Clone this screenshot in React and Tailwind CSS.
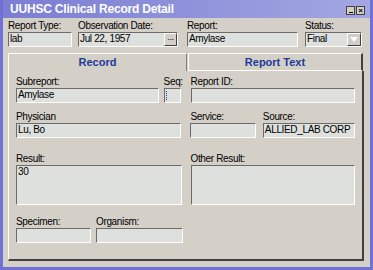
import React from 'react';

const font = { fontFamily: '"Liberation Sans", Arial, sans-serif' };

const Field = ({ label, value, className = '', h = 'h-[15px]', children }) => (
  <div className={`flex flex-col ${className}`}>
    <span className="text-[10px] leading-[12px] tracking-[-0.35px] text-black whitespace-nowrap">{label}</span>
    <div className={`relative ${h} bg-[#dde0dc] border border-t-[#6b6b6b] border-l-[#6b6b6b] border-b-[#ffffff] border-r-[#ffffff] text-[10px] leading-[12px] tracking-[-0.35px] px-[1px] text-black overflow-hidden whitespace-nowrap`}>
      {value}
      {children}
    </div>
  </div>
);

export default function App() {
  return (
    <div style={font} className="w-[373px] h-[270px] bg-[#d4d0c8] border-[3px] border-t-0 border-[#6f71d6] flex flex-col overflow-hidden">
      {/* title bar */}
      <div className="h-[18px] -mx-[3px] pl-[10px] pr-[8px] flex items-center justify-between bg-gradient-to-r from-[#7a7dd2] to-[#a4a7e2]">
        <span className="text-white font-bold text-[12px] leading-none tracking-[-0.2px]">UUHSC Clinical Record Detail</span>
        <div className="flex gap-[1px] mt-[3px]">
          <div className="w-[9px] h-[9px] bg-[#d4d0c8] border border-[#404040] flex items-end justify-center pb-[1px]">
            <div className="w-[4px] h-[1px] bg-black" />
          </div>
          <div className="w-[9px] h-[9px] bg-[#d4d0c8] border border-[#404040] text-[8px] leading-[7px] text-center font-bold">×</div>
        </div>
      </div>

      {/* top row */}
      <div className="flex pl-[5px] pt-[2px]">
        <Field label="Report Type:" value="lab" className="w-[64px]" />
        <Field label="Observation Date:" value="Jul 22, 1957" className="w-[100px] ml-[6px]">
          <div className="absolute right-0 top-0 w-[13px] h-[13px] bg-[#d4d0c8] border border-t-white border-l-white border-b-[#404040] border-r-[#404040] text-[9px] leading-[6px] text-center">...</div>
        </Field>
        <Field label="Report:" value="Amylase" className="w-[111px] ml-[9px]" />
        <Field label="Status:" value="Final" className="w-[57px] ml-[7px]">
          <div className="absolute right-0 top-0 w-[14px] h-[13px] bg-[#cfcdc6] border border-t-white border-l-white border-b-[#404040] border-r-[#404040] flex items-center justify-center">
            <div className="w-0 h-0 border-l-[4px] border-r-[4px] border-t-[5px] border-l-transparent border-r-transparent border-t-white" />
          </div>
        </Field>
      </div>

      {/* tabs */}
      <div className="flex pl-[5px] mt-[6px]">
        <div className="w-[179px] h-[18px] border-l border-t border-white border-r border-r-[#808080] flex items-center justify-center text-[11px] font-bold text-[#1c3a9c]">Record</div>
        <div className="w-[175px] h-[18px] ml-[1px] border-l border-t border-white border-r-2 border-r-[#404040] border-b border-b-white flex items-center justify-center text-[11px] font-bold text-[#1c3a9c]">Report Text</div>
      </div>

      {/* panel */}
      <div className="ml-[5px] w-[356px] h-[190px] border-l border-white border-r-2 border-r-[#404040] border-b-2 border-b-[#404040] px-[7px] pt-[5px] flex flex-col">
        <div className="flex">
          <Field label="Subreport:" value="Amylase" className="w-[144px]" />
          <Field label="Seq:" value="" className="w-[17px] ml-[5px]">
            <div className="absolute left-[1px] top-[2px] w-[1px] h-[9px] border-l border-dotted border-[#2030c0]" />
          </Field>
          <Field label="Report ID:" value="" className="w-[166px] ml-[10px]" />
        </div>
        <div className="flex mt-[8px]">
          <Field label="Physician" value="Lu, Bo" className="w-[167px]" />
          <Field label="Service:" value="" className="w-[66px] ml-[9px]" />
          <Field label="Source:" value="ALLIED_LAB CORP" className="w-[93px] ml-[7px]" />
        </div>
        <div className="flex mt-[15px]">
          <Field label="Result:" value="30" className="w-[167px]" h="h-[40px]" />
          <Field label="Other Result:" value="" className="w-[166px] ml-[9px]" h="h-[40px]" />
        </div>
        <div className="flex mt-[11px]">
          <Field label="Specimen:" value="" className="w-[75px]" />
          <Field label="Organism:" value="" className="w-[87px] ml-[5px]" />
        </div>
      </div>
    </div>
  );
}
